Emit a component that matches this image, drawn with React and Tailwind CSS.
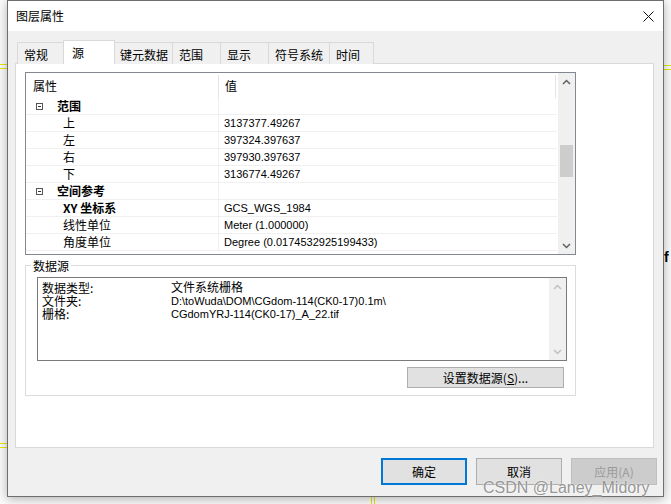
import React from "react";

const cjk = "font-['Microsoft_YaHei_UI','Noto_Sans_CJK_SC',sans-serif]";
const tah = "font-['Liberation_Sans','Noto_Sans_CJK_SC',sans-serif]";

const tabs = [
  { label: "常规", w: "w-[48px]" },
  { label: "源", w: "w-[48px]", active: true },
  { label: "键元数据", w: "w-[59px]" },
  { label: "范围", w: "w-[48px]" },
  { label: "显示", w: "w-[48px]" },
  { label: "符号系统", w: "w-[61px]" },
  { label: "时间", w: "w-[45px]" },
];

const rows = [
  { cat: "范围" },
  { name: "上", value: "3137377.49267" },
  { name: "左", value: "397324.397637" },
  { name: "右", value: "397930.397637" },
  { name: "下", value: "3136774.49267" },
  { cat: "空间参考" },
  { name: "XY 坐标系", value: "GCS_WGS_1984", bold: true },
  { name: "线性单位", value: "Meter (1.000000)" },
  { name: "角度单位", value: "Degree (0.0174532925199433)" },
];

function Chevron({ up, color = "#606060" }) {
  return (
    <svg width="9" height="6" viewBox="0 0 9 6">
      <path d={up ? "M1 5 L4.5 1.5 L8 5" : "M1 1 L4.5 4.5 L8 1"} fill="none" stroke={color} strokeWidth="1.5" />
    </svg>
  );
}

function Minus() {
  return (
    <span className="w-[7px] h-[7px] border border-[#555] flex items-center justify-center">
      <span className="w-[3px] h-px bg-[#333]" />
    </span>
  );
}

function PropertyGrid() {
  return (
    <div className="w-[551px] h-[183px] border border-[#828790] flex bg-white">
      <div className="w-[532px] flex flex-col">
        <div className="h-[25px] flex text-[12px] text-black">
          <div className={`w-[192px] pl-[7px] flex items-center ${cjk}`}>属性</div>
          <div className="w-px mt-[2px] bg-[#e5e5e5]" />
          <div className={`flex-1 pl-[6px] flex items-center ${cjk}`}>值</div>
          <div className="w-px mt-[2px] bg-[#e5e5e5] mr-[2px]" />
        </div>
        {rows.map((r, i) => (
          <div key={i} className="w-[531px] h-[17px] flex border-b border-[#f0f0f0] text-black">
            {r.cat ? (
              <div className="w-[193px] border-r border-[#f0f0f0] flex items-center pl-[10px]">
                <Minus />
                <span className={`ml-[14px] text-[12px] font-bold leading-[16px] ${cjk}`}>{r.cat}</span>
              </div>
            ) : (
              <div className={`w-[193px] border-r border-[#f0f0f0] flex items-center pl-[37px] text-[12px] leading-[16px] ${cjk} ${r.bold ? "font-bold" : ""}`}>
                {r.name}
              </div>
            )}
            <div className={`flex-1 pl-[5px] flex items-center text-[11px] ${tah}`}>{r.value}</div>
          </div>
        ))}
      </div>
      <div className="flex-1 bg-[#f0f0f0] flex flex-col items-center">
        <div className="h-[17px] flex items-center justify-center"><Chevron up /></div>
        <div className="mt-[55px] w-[13px] h-[32px] bg-[#cdcdcd]" />
        <div className="flex-1" />
        <div className="h-[17px] flex items-center justify-center"><Chevron /></div>
      </div>
    </div>
  );
}

function DataSource() {
  const lines = [
    ["数据类型:", <span className={`text-[12px] ${cjk}`}>文件系统栅格</span>],
    ["文件夹:", "D:\\toWuda\\DOM\\CGdom-114(CK0-17)0.1m\\"],
    ["栅格:", "CGdomYRJ-114(CK0-17)_A_22.tif"],
  ];
  return (
    <fieldset className="mt-[4px] w-[551px] h-[137px] border border-[#dcdcdc] pl-[11px] pr-[8px]">
      <legend className={`-ml-[6px] px-[2px] text-[12px] leading-[13px] text-black ${cjk}`}>数据源</legend>
      <div className="mt-[5px] w-[530px] h-[84px] border border-[#7a7a7a] flex">
        <div className="flex-1 pl-[4px] pt-[3px]">
          {lines.map(([k, v], i) => (
            <div key={i} className="flex h-[13px] items-center text-black">
              <span className={`w-[129px] text-[12px] leading-[12px] ${cjk}`}>{k}</span>
              <span className={`text-[11px] leading-[12px] ${tah}`}>{v}</span>
            </div>
          ))}
        </div>
        <div className="w-[17px] bg-[#f0f0f0] flex flex-col items-center justify-between">
          <div className="h-[17px] flex items-center"><Chevron up color="#c0c0c0" /></div>
          <div className="h-[17px] flex items-center"><Chevron color="#c0c0c0" /></div>
        </div>
      </div>
      <div className="mt-[6px] flex justify-end pr-[3px]">
        <button className={`w-[157px] h-[21px] bg-[#e1e1e1] border border-[#adadad] text-[12px] text-black flex items-center justify-center ${cjk}`}>
          设置数据源(<span className="underline">S</span>)...
        </button>
      </div>
    </fieldset>
  );
}

export default function App() {
  return (
    <div className="relative w-[671px] h-[504px] overflow-hidden bg-[#fbfbfb]">
      {/* map canvas lines behind the dialog */}
      <span className="absolute left-0 top-[64px] w-[10px] h-px bg-[#e8e800]" />
      <span className="absolute left-0 top-[68px] w-[10px] h-px bg-[#e8e800]" />
      <span className="absolute left-0 top-[443px] w-[10px] h-px bg-[#e8e800]" />
      <span className="absolute left-0 top-[447px] w-[10px] h-px bg-[#e8e800]" />
      <span className="absolute right-0 top-[65px] w-[10px] h-px bg-[#e8e800]" />
      <span className="absolute right-0 top-[69px] w-[10px] h-px bg-[#e8e800]" />
      <span className="absolute left-[371px] top-[490px] w-px h-[14px] bg-[#e8e800]" />
      <span className="absolute left-[374px] top-[490px] w-px h-[14px] bg-[#e8e800]" />
      <span className={`absolute left-[664px] top-[247px] text-[14px] font-bold text-black ${tah}`}>f</span>

      <div className="relative ml-[7px] w-[657px] h-[497px] border border-[#6e6e6e] bg-[#f0f0f0] flex flex-col shadow-[0_2px_10px_rgba(0,0,0,0.3)]">
        <div className="h-[30px] bg-white flex items-center justify-between pl-[8px] pr-[9px]">
          <span className={`text-[12px] text-black ${cjk}`}>图层属性</span>
          <svg width="11" height="11" viewBox="0 0 11 11">
            <path d="M0.5 0.5 L10.5 10.5 M10.5 0.5 L0.5 10.5" stroke="#111" strokeWidth="1" />
          </svg>
        </div>

        <div className="pt-[9px] pl-[7px]">
          <div className="flex items-end h-[24px] ml-[2px]">
            {tabs.map((t, i) =>
              t.active ? (
                <div key={i} className={`relative z-10 -mx-[2px] w-[52px] h-[24px] bg-white border-l border-r border-t border-[#d9d9d9] pl-[8px] pt-[3px] text-[12px] text-black ${cjk}`}>
                  {t.label}
                </div>
              ) : (
                <div key={i} className={`${t.w} h-[22px] bg-[#f0f0f0] border-t border-l border-[#d9d9d9] ${i === tabs.length - 1 ? "border-r" : ""} pl-[6px] pt-[3px] text-[12px] text-black ${cjk}`}>
                  {t.label}
                </div>
              )
            )}
          </div>
          <div className="-mt-px w-[639px] h-[385px] border border-[#d9d9d9] bg-white pt-[8px] pl-[9px]">
            <PropertyGrid />
            <DataSource />
          </div>
        </div>

        <div className="mt-[10px] flex justify-end gap-[9px] pr-[6px]">
          <button className={`w-[86px] h-[27px] bg-[#e1e1e1] border-2 border-[#0078d7] text-[12px] text-black ${cjk}`}>确定</button>
          <button className={`w-[86px] h-[27px] bg-[#e1e1e1] border border-[#adadad] text-[12px] text-black ${cjk}`}>取消</button>
          <button className={`w-[86px] h-[27px] bg-[#cccccc] border border-[#bfbfbf] text-[12px] text-[#9a9a9a] ${cjk}`}>应用(A)</button>
        </div>
      </div>

      <span className={`absolute left-[483px] top-[476px] text-[16px] text-[#8a8a8a]/90 ${tah} [text-shadow:0_0_2px_#fff]`}>
        CSDN @Laney_Midory
      </span>
    </div>
  );
}
